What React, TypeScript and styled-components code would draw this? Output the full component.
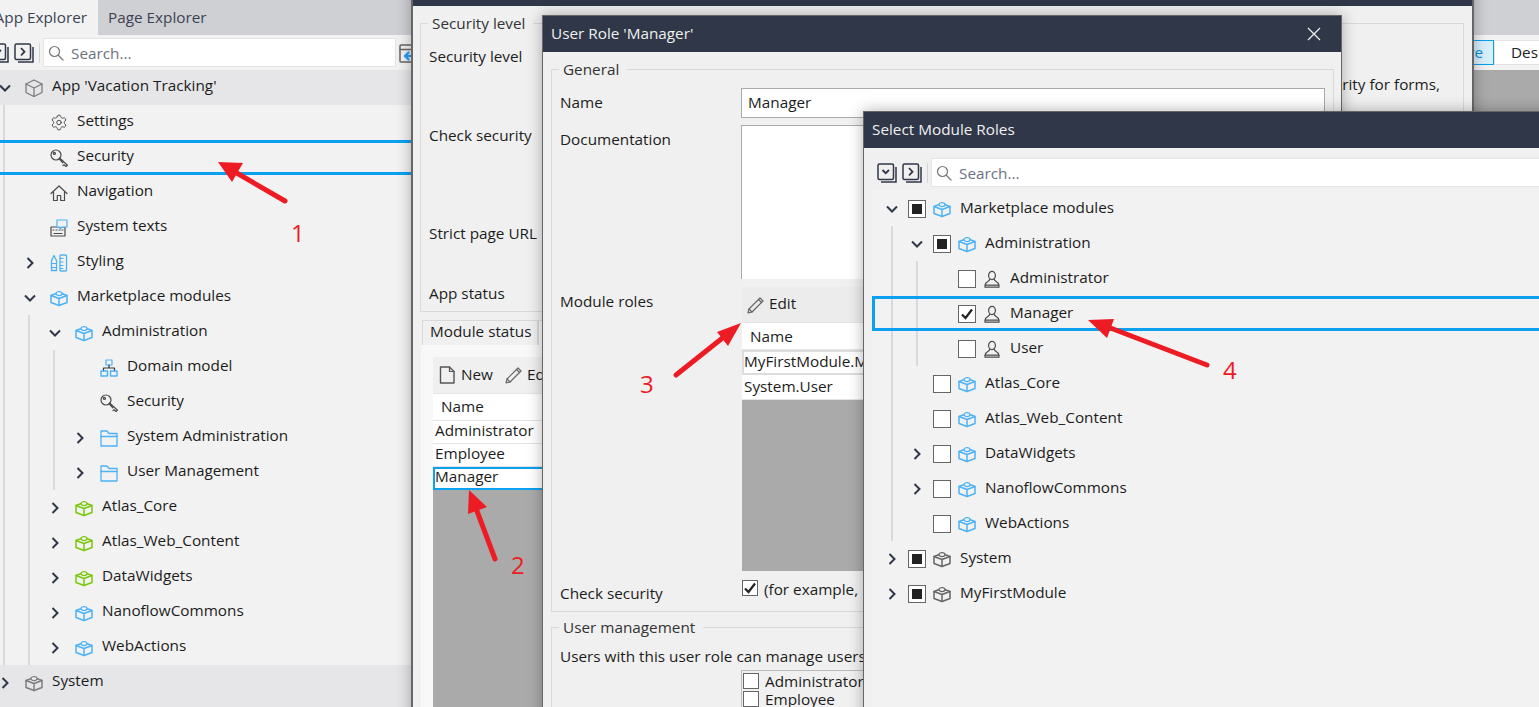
import React from "react";
import styled, { createGlobalStyle } from "styled-components";
import { Settings } from "lucide-react";

const Global = createGlobalStyle`
html, body { margin: 0; padding: 0; height: 100%; background: #f2f2f2; overflow: hidden; }
body { font: 15.3px/20px "Open Sans", "Noto Sans", sans-serif; color: #1c1c1c; }
* { box-sizing: border-box; }
`

const NAVY = "#2f3748"
const BLUE = "#4db2f5"
const GREEN = "#7ac70c"
const GREY = "#7d7d7d"
const DARK = "#4a4a4a"

type IconProps = { color?: string }

const Glyph = ({ children, color = DARK, w = 18, h = 18 }: { children: React.ReactNode; color?: string; w?: number; h?: number }) => (
    <svg width={w} height={h} viewBox={`0 0 ${w} ${h}`} fill="none" stroke={color} strokeWidth="1.2" strokeLinejoin="round" strokeLinecap="round">
        {children}
    </svg>
)

const Brick = ({ color = BLUE }: IconProps) => (
    <Glyph color={color} h={18}>
        <path d="M1 6.5 9 3.5l8 3v7l-8 3-8-3z" strokeWidth="1.5" />
        <path d="M1 6.5 9 9.5l8-3M9 9.5v7" strokeWidth="1.5" />
        <ellipse cx="9" cy="4.6" rx="3" ry="2" fill="#f2f2f2" />
    </Glyph>
)

const Cube = () => (
    <Glyph color={GREY}>
        <path d="M9 1 17 5v8.5L9 17.5 1 13.5V5z" strokeWidth="1.3" />
        <path d="M1 5l8 4 8-4M9 9v8.5" strokeWidth="1.3" />
    </Glyph>
)

const Gear = () => <Settings size={19} color={DARK} strokeWidth={1.3} />

const Key = () => (
    <Glyph>
        <circle cx="6" cy="6" r="5" />
        <circle cx="4.4" cy="4.4" r="1" />
        <path d="M9.6 9 17.500 16.200 16 17.500 14 15.800l-1 .7M9 9.600l3.800 4.200" />
    </Glyph>
)

const House = () => (
    <Glyph>
        <path d="M1 9.5 9 2l8 7.5" />
        <path d="M3.5 8v8.5h3.8v-5h3.4v5h3.8V8" />
    </Glyph>
)

const SystemTexts = () => (
    <Glyph>
        <rect x="1" y="8" width="14" height="9" />
        <path d="M3 11h1M6 11h1M9 11h1M12 11h1M4 14.5h8" />
        <path d="M7 1h10v7h-5l-2 2V8H7z" stroke={BLUE} fill="#f2f2f2" />
    </Glyph>
)

const Styling = () => (
    <Glyph color={BLUE}>
        <path d="M1.5 6.5 4 1.5l2.5 5v10h-5z" strokeWidth="1.3" />
        <path d="M1.5 9.5h5M1.5 13.5h5" />
        <rect x="10" y="1" width="6.5" height="16" rx="1" strokeWidth="1.3" />
        <path d="M10 4.5h3M10 8h3M10 11.5h3M10 14.5h3" />
    </Glyph>
)

const Domain = () => (
    <Glyph color={BLUE}>
        <rect x="6" y="1" width="6" height="5" />
        <path d="M9 6v3M3.5 12V9h11v3" stroke={NAVY} />
        <rect x="1" y="12" width="6.5" height="5" strokeWidth="1.4" />
        <rect x="10.5" y="12" width="6.5" height="5" strokeWidth="1.4" />
    </Glyph>
)

const Folder = () => (
    <Glyph color={BLUE}>
        <path d="M1 17V2h6l2 2.5h8V17z" strokeWidth="1.3" />
        <path d="M1 7.5h16" strokeWidth="1.3" />
    </Glyph>
)

const Person = () => (
    <Glyph>
        <ellipse cx="9" cy="5.5" rx="3.4" ry="4.2" />
        <path d="M6.8 9c0 3-4.8 2.6-4.8 6.2h14c0-3.6-4.800-3.200-4.800-6.200M2 15.200v2h14v-2" />
    </Glyph>
)

const Pencil = () => (
    <Glyph color="#666">
        <path d="M2 16.800 3 13 14 2l3 3L6 16z" />
        <path d="M3 13l3 3M12.500 3.500l3 3" />
    </Glyph>
)

const Page = () => (
    <Glyph color="#555">
        <path d="M2.500 1h9l4.500 4.500V17h-13.500z" strokeWidth="1.400" />
        <path d="M11.500 1v4.500H16" />
    </Glyph>
)

const Magnifier = () => (
    <Glyph color="#777" w={16} h={16}>
        <circle cx="6.500" cy="6.500" r="5" />
        <path d="M10.500 10.500 15 15" />
    </Glyph>
)

const Dock = () => (
    <Glyph color="#666" w={20} h={20}>
        <rect x="1" y="2" width="17" height="17" rx="1" strokeWidth="1.5" />
        <path d="M1 6.500h17" strokeWidth="1.5" />
        <path d="M6 13h10M6 13l3.500-3.500M6 13l3.500 3.500" stroke="#2a9df4" strokeWidth="2.400" />
    </Glyph>
)

const StackButton = ({ dir }: { dir: "down" | "right" }) => (
    <svg width="20" height="20" viewBox="0 0 20 20" fill="none" stroke={NAVY} strokeWidth="1.5">
        <rect x="1" y="1" width="15.500" height="15.500" rx="1.500" />
        <path d="M19 4v15H4" />
        <path d={dir === "down" ? "M5.500 7 8.700 10.200 12 7" : "M7 5l3.500 3.700L7 12.500"} strokeWidth="1.800" />
    </svg>
)

const Chevron = ({ dir }: { dir: "down" | "right" }) => (
    <svg width="14" height="14" viewBox="0 0 14 14" fill="none" stroke={NAVY} strokeWidth="2">
        <path d={dir === "down" ? "M2 4.500 7 9.500 12 4.500" : "M4.500 2 9.500 7 4.500 12"} />
    </svg>
)

const Tick = () => (
    <svg width="14" height="14" viewBox="0 0 14 14" fill="none" stroke="#222" strokeWidth="2.200">
        <path d="M2 7.500 5.500 11 12 2.500" />
    </svg>
)

const Desk = styled.div`
position: relative;
width: 100vw;
height: 100vh;
overflow: hidden;
display: flex;
`

/* left explorer */
const Explorer = styled.aside`
width: 411px;
flex: none;
display: flex;
flex-direction: column;
overflow: hidden;
`

const TabStrip = styled.div`
height: 35px;
flex: none;
display: flex;
background: #cfd0d4;
`

const ExplorerTab = styled.div<{ $active?: boolean }>`
height: 35px;
line-height: 34px;
color: #3c4352;
background: ${p => (p.$active ? "#f2f2f2" : "transparent")};
padding: ${p => (p.$active ? "0 11px 0 0" : "0 10px")};
width: ${p => (p.$active ? "98px" : "auto")};
display: flex;
justify-content: flex-end;
white-space: nowrap;
`

const Toolbar = styled.div<{ $shift: number }>`
height: 35px;
flex: none;
display: flex;
align-items: center;
gap: 5px;
margin-left: ${p => p.$shift}px;
svg { flex: none; }
`

const Divider = styled.span`
width: 1px;
height: 20px;
background: #d4d4d8;
flex: none;
`

const SearchBox = styled.label<{ $width: number }>`
width: ${p => p.$width}px;
height: 29px;
margin-left: -2px;
flex: none;
display: flex;
align-items: center;
gap: 7px;
padding-left: 4px;
background: #fff;
border: 1px solid #e4e4e4;
`

const SearchField = styled.input`
border: 0;
outline: 0;
flex: 1;
min-width: 0;
padding: 0;
background: transparent;
font: inherit;
&::placeholder { color: #6b7280; opacity: 1; }
`

const DockSlot = styled.span`
margin-left: -2px;
display: flex;
flex: none;
`

const Tree = styled.div<{ $shift: number }>`
margin-left: ${p => p.$shift}px;
display: flex;
flex-direction: column;
`

const Row = styled.div<{ $tone?: boolean; $reach?: number }>`
position: relative;
height: 35px;
flex: none;
display: flex;
align-items: center;
background: ${p => (p.$tone ? "#e6e6e9" : "transparent")};
${p => p.$reach !== undefined && `
&::after {
    content: "";
    position: absolute;
    top: 0;
    bottom: 0;
    left: -${p.$reach}px;
    right: -900px;
    border: 3px solid #0ba0f0;
}
`}
`

const ChevronSlot = styled.span`
width: 20px;
flex: none;
display: flex;
justify-content: center;
`

const IconSlot = styled.span`
width: 18px;
margin: 0 9px 0 10px;
flex: none;
display: flex;
justify-content: center;
`

const PickerIconSlot = styled(IconSlot)`
margin: 0 9px 0 7px;
`

const RowLabel = styled.span`
white-space: nowrap;
margin-top: -5px;
`

const Branch = styled.div<{ $offset?: number }>`
margin-left: ${p => p.$offset ?? 8}px;
padding-left: ${p => 15 - ((p.$offset ?? 8) - 8)}px;
border-left: 2px solid #d9d9df;
display: flex;
flex-direction: column;
`

const Filler = styled.div`
flex: 1;
background: #e6e6e9;
`

const Box = styled.span<{ $small?: boolean }>`
width: ${p => (p.$small ? 16 : 18)}px;
height: ${p => (p.$small ? 16 : 18)}px;
flex: none;
border: 1px solid #666;
background: #fff;
display: flex;
align-items: center;
justify-content: center;
`

const Mixed = styled.span`
width: 10px;
height: 10px;
background: #222;
`

/* main canvas behind the windows */
const Workspace = styled.main`
flex: 1;
min-width: 0;
display: flex;
flex-direction: column;
`

const ModeBar = styled.div`
height: 35px;
flex: none;
display: flex;
align-items: center;
padding-left: 989px;
background: #f2f2f2;
white-space: nowrap;
`

const ModeButton = styled.div<{ $active?: boolean }>`
height: 25px;
line-height: 22px;
flex: none;
border: 1px solid ${p => (p.$active ? "#0ba0f0" : "#e4e4e4")};
background: ${p => (p.$active ? "#d9f0fc" : "#fff")};
color: ${p => (p.$active ? "#0a8fdc" : "#222")};
width: ${p => (p.$active ? "94px" : "80px")};
padding: ${p => (p.$active ? "0 10px 0 0" : "0 0 0 16px")};
text-align: ${p => (p.$active ? "right" : "left")};
`

const Canvas = styled.div`
flex: 1;
background: #aaa;
`

/* floating windows */
const Win = styled.section<{ $x: number; $y: number; $w: number; $edge: number }>`
position: absolute;
left: ${p => p.$x}px;
top: ${p => p.$y}px;
width: ${p => p.$w}px;
height: 900px;
border: ${p => p.$edge}px solid #666;
background: #f0f0f0;
box-shadow: 0 0 14px rgba(0, 0, 0, 0.3);
overflow: hidden;
`

const TitleBar = styled.header`
height: 36px;
display: flex;
align-items: center;
justify-content: space-between;
padding: 0 20px 0 8px;
background: ${NAVY};
color: #f0f0f0;
`

const TitleText = styled.span`
margin-top: -2px;
`

const Body = styled.div<{ $pad: string }>`
padding: ${p => p.$pad};
display: flex;
flex-direction: column;
`

const Group = styled.fieldset`
margin: 0;
padding: 0 8px 8px;
border: 1px solid #d9d9d9;
min-width: 0;
`

const Legend = styled.legend`
margin-left: -1px;
padding: 0 8px 0 4px;
line-height: 20px;
color: #333;
`

const SecurityRow = styled.div<{ $h: number }>`
height: ${p => p.$h}px;
display: flex;
justify-content: space-between;
`

const SecurityGroup = styled(Group)`
padding-top: 13px;
`

const Note = styled.span`
margin-top: 28px;
padding-right: 15px;
`

const ModuleTabs = styled.div`
margin: 8px 0 0 2px;
height: 25px;
display: flex;
`

const ModuleTab = styled.div`
width: 116px;
height: 25px;
line-height: 20px;
padding-left: 7px;
background: #f0f0f0;
border: 1px solid #d9d9d9;
border-bottom: 0;
white-space: nowrap;
`

const NextTab = styled(ModuleTab)`
background: #f8f8f8;
`

const TabPanel = styled.div`
margin-left: 1px;
padding: 12px 0 0 12px;
background: #f8f8f8;
`

const GridBar = styled.div`
height: 36px;
display: flex;
align-items: center;
gap: 4px;
padding-left: 5px;
background: #f0f0f0;
`

const GridAction = styled.span`
display: flex;
align-items: center;
gap: 5px;
margin-right: 7px;
span { margin-top: -3px; }
`

const GridHead = styled.div`
height: 28px;
line-height: 24px;
padding-left: 8px;
background: #fff;
border: 1px solid #e4e4e4;
border-width: 1px 0;
`

const GridRow = styled.div<{ $mark?: "selected" | "focus"; $h: number }>`
height: ${p => p.$h}px;
line-height: ${p => p.$h - 4}px;
padding-left: 2px;
background: #fff;
white-space: nowrap;
border-bottom: 1px solid #e4e4e4;
${p => p.$mark === "selected" && `outline: 2px solid #0ba0f0; outline-offset: -2px;`}
${p => p.$mark === "focus" && `outline: 2px solid #ddd; outline-offset: -2px;`}
`

const GridEmpty = styled.div<{ $h: number }>`
height: ${p => p.$h}px;
background: #aaa;
`

const RoleForm = styled.div`
padding-top: 9px;
display: grid;
grid-template-columns: 181px 1fr;
`

const RoleLabel = styled.div<{ $top: number }>`
padding-top: ${p => p.$top}px;
`

const TextInput = styled.input`
width: 100%;
height: 30px;
padding: 0 6px 2px;
border: 1px solid #aaa;
background: #fff;
color: #1c1c1c;
font: inherit;
outline: 0;
margin-bottom: 7px;
display: block;
`

const TextArea = styled.textarea`
width: 100%;
height: 154px;
padding: 4px 6px;
border: 1px solid #aaa;
border-bottom: 0;
background: #fff;
font: inherit;
resize: none;
outline: 0;
display: block;
margin-bottom: 8px;
`

const RoleGrid = styled.div`
margin-left: 1px;
${GridHead} { line-height: 26px; }
${GridRow} { line-height: 23px; }
`

const RoleBar = styled.div`
height: 35px;
display: flex;
align-items: center;
gap: 4px;
padding-left: 4px;
background: #ececec;
`

const Consent = styled.div`
height: 32px;
padding-top: 9px;
display: flex;
align-items: flex-start;
gap: 6px;
margin-left: 1px;
white-space: nowrap;
line-height: 18px;
`

const UserGroup = styled(Group)`
margin-top: 5px;
`

const UserIntro = styled.div`
padding-top: 9px;
height: 33px;
white-space: nowrap;
`

const RoleList = styled.div`
margin-left: 181px;
padding: 1px;
border: 1px solid #bbb;
`

const RoleOption = styled.div`
height: 18px;
display: flex;
align-items: center;
gap: 6px;
line-height: 18px;
`

const CloseGlyph = styled.svg`
flex: none;
`

/* picker tree */
const PickerTree = styled(Tree)`
background: #f2f2f2;
padding-left: 10px;
padding-top: 1px;
height: 520px;
${RowLabel} { margin-top: -3px; }
`

const PickerBox = styled.span`
margin-left: 6px;
display: flex;
flex: none;
`

/* red annotations drawn over the screenshot */
const Marks = styled.svg`
position: absolute;
left: 0;
top: 0;
pointer-events: none;
`

const Callout = styled.span<{ $x: number; $y: number }>`
position: absolute;
left: ${p => p.$x}px;
top: ${p => p.$y}px;
font-size: 24px;
line-height: 30px;
color: #ed1c24;
`

type Node = {
    label: string
    icon: React.ReactNode
    chevron?: "down" | "right"
    tone?: boolean
    reach?: number
    check?: "none" | "mixed" | "on"
    children?: Node[]
}

const explorerNodes: Node[] = [
    {
        label: "App 'Vacation Tracking'", icon: <Cube />, chevron: "down", tone: true,
        children: [
            { label: "Settings", icon: <Gear /> },
            { label: "Security", icon: <Key />, reach: 30 },
            { label: "Navigation", icon: <House /> },
            { label: "System texts", icon: <SystemTexts /> },
            { label: "Styling", icon: <Styling />, chevron: "right" },
            {
                label: "Marketplace modules", icon: <Brick />, chevron: "down",
                children: [
                    {
                        label: "Administration", icon: <Brick />, chevron: "down",
                        children: [
                            { label: "Domain model", icon: <Domain /> },
                            { label: "Security", icon: <Key /> },
                            { label: "System Administration", icon: <Folder />, chevron: "right" },
                            { label: "User Management", icon: <Folder />, chevron: "right" },
                        ],
                    },
                    { label: "Atlas_Core", icon: <Brick color={GREEN} />, chevron: "right" },
                    { label: "Atlas_Web_Content", icon: <Brick color={GREEN} />, chevron: "right" },
                    { label: "DataWidgets", icon: <Brick color={GREEN} />, chevron: "right" },
                    { label: "NanoflowCommons", icon: <Brick />, chevron: "right" },
                    { label: "WebActions", icon: <Brick />, chevron: "right" },
                ],
            },
        ],
    },
    { label: "System", icon: <Brick color={GREY} />, chevron: "right", tone: true },
]

const pickerNodes: Node[] = [
    {
        label: "Marketplace modules", icon: <Brick />, chevron: "down", check: "mixed",
        children: [
            {
                label: "Administration", icon: <Brick />, chevron: "down", check: "mixed",
                children: [
                    { label: "Administrator", icon: <Person />, check: "none" },
                    { label: "Manager", icon: <Person />, check: "on", reach: 60 },
                    { label: "User", icon: <Person />, check: "none" },
                ],
            },
            { label: "Atlas_Core", icon: <Brick />, check: "none" },
            { label: "Atlas_Web_Content", icon: <Brick />, check: "none" },
            { label: "DataWidgets", icon: <Brick />, chevron: "right", check: "none" },
            { label: "NanoflowCommons", icon: <Brick />, chevron: "right", check: "none" },
            { label: "WebActions", icon: <Brick />, check: "none" },
        ],
    },
    { label: "System", icon: <Brick color="#666" />, chevron: "right", check: "mixed" },
    { label: "MyFirstModule", icon: <Brick color="#666" />, chevron: "right", check: "mixed" },
]

const CheckBox = ({ state, small }: { state: "none" | "mixed" | "on"; small?: boolean }) => (
    <Box $small={small}>
        {state === "mixed" && <Mixed />}
        {state === "on" && <Tick />}
    </Box>
)

const TreeNode = ({ node, offset }: { node: Node; offset?: number }) => (
    <>
        <Row $tone={node.tone} $reach={node.reach}>
            <ChevronSlot>{node.chevron && <Chevron dir={node.chevron} />}</ChevronSlot>
            {node.check ? (
                <>
                    <PickerBox><CheckBox state={node.check} /></PickerBox>
                    <PickerIconSlot>{node.icon}</PickerIconSlot>
                </>
            ) : (
                <IconSlot>{node.icon}</IconSlot>
            )}
            <RowLabel>{node.label}</RowLabel>
        </Row>
        {node.children && (
            <Branch $offset={offset}>
                {node.children.map((child, i) => (
                    <TreeNode key={i} node={child} offset={offset} />
                ))}
            </Branch>
        )}
    </>
)

const arrows = [
    { tail: "285,201 228,168", head: "218,162 243,163 232,182" },
    { tail: "495,559 474,503", head: "469,490 468,514 487,507" },
    { tail: "676,375 730,332", head: "741,323 717,332 728,346" },
    { tail: "1207,365 1100,324", head: "1088,320 1114,319 1107,338" },
]

const App = () => {
    return (
        <Desk>
            <Global />
            <Explorer>
                <TabStrip>
                    <ExplorerTab $active>App Explorer</ExplorerTab>
                    <ExplorerTab>Page Explorer</ExplorerTab>
                </TabStrip>
                <Toolbar $shift={-11}>
                    <StackButton dir="down" />
                    <StackButton dir="right" />
                    <Divider />
                    <SearchBox $width={353}>
                        <Magnifier />
                        <SearchField placeholder="Search..." />
                    </SearchBox>
                    <DockSlot><Dock /></DockSlot>
                </Toolbar>
                <Tree $shift={-5}>
                    {explorerNodes.map((n, i) => <TreeNode key={i} node={n} />)}
                </Tree>
                <Filler />
            </Explorer>

            <Workspace>
                <TabStrip />
                <ModeBar>
                    <ModeButton $active>Live</ModeButton>
                    <ModeButton>Design</ModeButton>
                </ModeBar>
                <Canvas />
            </Workspace>

            <Win $x={411} $y={-32} $w={1063} $edge={2}>
                <TitleBar />
                <Body $pad="7px 8px 0 7px">
                    <SecurityGroup>
                        <Legend>Security level</Legend>
                        <SecurityRow $h={79}>
                            <span>Security level</span>
                            <Note>rity for forms,</Note>
                        </SecurityRow>
                        <SecurityRow $h={98}><span>Check security</span></SecurityRow>
                        <SecurityRow $h={60}><span>Strict page URL</span></SecurityRow>
                        <SecurityRow $h={20}><span>App status</span></SecurityRow>
                    </SecurityGroup>
                    <ModuleTabs>
                        <ModuleTab>Module status</ModuleTab>
                        <NextTab />
                    </ModuleTabs>
                    <TabPanel>
                        <GridBar>
                            <GridAction><Page /><span>New</span></GridAction>
                            <GridAction><Pencil /><span>Edit</span></GridAction>
                        </GridBar>
                        <GridHead>Name</GridHead>
                        <GridRow $h={23}>Administrator</GridRow>
                        <GridRow $h={23}>Employee</GridRow>
                        <GridRow $h={23} $mark="selected">Manager</GridRow>
                        <GridEmpty $h={300} />
                    </TabPanel>
                </Body>
            </Win>

            <Win $x={542} $y={15} $w={800} $edge={1}>
                <TitleBar>
                    <TitleText>User Role 'Manager'</TitleText>
                    <CloseGlyph width="14" height="14" viewBox="0 0 14 14" stroke="#f0f0f0" strokeWidth="1.300">
                        <path d="M1 1l12 12M13 1 1 13" />
                    </CloseGlyph>
                </TitleBar>
                <Body $pad="7px 7px 0 8px">
                    <Group>
                        <Legend>General</Legend>
                        <RoleForm>
                            <RoleLabel $top={4}>Name</RoleLabel>
                            <TextInput readOnly value="Manager" />
                            <RoleLabel $top={4}>Documentation</RoleLabel>
                            <TextArea readOnly />
                            <RoleLabel $top={4}>Module roles</RoleLabel>
                            <RoleGrid>
                                <RoleBar>
                                    <GridAction><Pencil /><span>Edit</span></GridAction>
                                </RoleBar>
                                <GridHead>Name</GridHead>
                                <GridRow $h={25} $mark="focus">MyFirstModule.Manager</GridRow>
                                <GridRow $h={25}>System.User</GridRow>
                                <GridEmpty $h={171} />
                            </RoleGrid>
                            <RoleLabel $top={12}>Check security</RoleLabel>
                            <Consent>
                                <CheckBox state="on" small />
                                <span>(for example, </span>
                            </Consent>
                        </RoleForm>
                    </Group>
                    <UserGroup>
                        <Legend>User management</Legend>
                        <UserIntro>Users with this user role can manage users</UserIntro>
                        <RoleList>
                            <RoleOption><CheckBox state="none" small />Administrator</RoleOption>
                            <RoleOption><CheckBox state="none" small />Employee</RoleOption>
                        </RoleList>
                    </UserGroup>
                </Body>
            </Win>

            <Win $x={863} $y={111} $w={800} $edge={1}>
                <TitleBar>
                    <TitleText>Select Module Roles</TitleText>
                </TitleBar>
                <Body $pad="7px 0 0 8px">
                    <Toolbar $shift={5}>
                        <StackButton dir="down" />
                        <StackButton dir="right" />
                        <Divider />
                        <SearchBox $width={700}>
                            <Magnifier />
                            <SearchField placeholder="Search..." />
                        </SearchBox>
                    </Toolbar>
                    <PickerTree $shift={0}>
                        {pickerNodes.map((n, i) => <TreeNode key={i} node={n} offset={9} />)}
                    </PickerTree>
                </Body>
            </Win>

            <Marks width="1539" height="707" viewBox="0 0 1539 707">
                {arrows.map((a, i) => (
                    <g key={i}>
                        <polyline points={a.tail} stroke="#ed1c24" strokeWidth="5" strokeLinecap="round" fill="none" />
                        <polygon points={a.head} fill="#ed1c24" />
                    </g>
                ))}
            </Marks>
            <Callout $x={291} $y={218}>1</Callout>
            <Callout $x={511} $y={550}>2</Callout>
            <Callout $x={640} $y={369}>3</Callout>
            <Callout $x={1223} $y={355}>4</Callout>
        </Desk>
    )
}

export default App
